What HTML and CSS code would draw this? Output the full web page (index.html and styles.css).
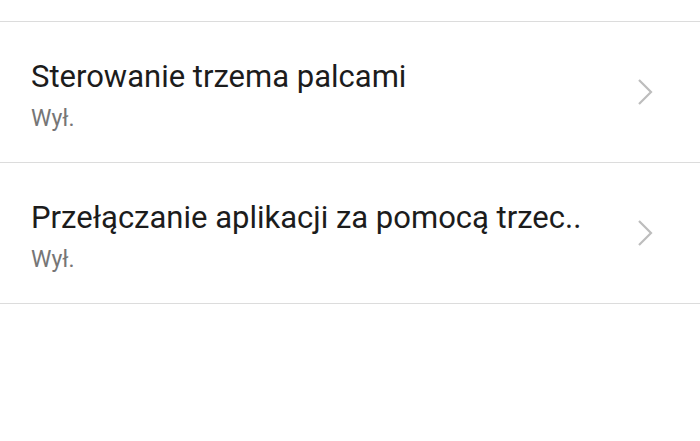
FILE: index.html
```html
<!DOCTYPE html>
<html lang="pl">
<head>
<meta charset="utf-8">
<link rel="stylesheet" href="styles.css">
</head>
<body>
<div class="list">
  <div class="spacer"></div>
  <div class="row">
    <div class="text">
      <div class="title">Sterowanie trzema palcami</div>
      <div class="sub">Wył.</div>
    </div>
    <svg class="chev" width="16" height="28" viewBox="0 0 16 28"><path d="M2 2 L14 14 L2 26" fill="none" stroke="#bdbdbd" stroke-width="2.2"/></svg>
  </div>
  <div class="row">
    <div class="text">
      <div class="title">Przełączanie aplikacji za pomocą trzec..</div>
      <div class="sub">Wył.</div>
    </div>
    <svg class="chev" width="16" height="28" viewBox="0 0 16 28"><path d="M2 2 L14 14 L2 26" fill="none" stroke="#bdbdbd" stroke-width="2.2"/></svg>
  </div>
</div>
</body>
</html>
```
FILE: styles.css
```css
html, body {
  margin: 0;
  padding: 0;
  background: #ffffff;
}
body {
  font-family: Roboto, "Noto Sans", sans-serif;
  width: 700px;
  height: 441px;
  overflow: hidden;
}
.spacer {
  height: 21px;
  border-bottom: 1px solid #dcdcdc;
}
.row {
  height: 140px;
  border-bottom: 1px solid #dcdcdc;
  display: flex;
  align-items: center;
  padding: 0 47px 0 31px;
}
.text {
  flex: 1;
  padding-top: 8px;
}
.title {
  font-size: 31px;
  line-height: 36px;
  color: #1c1c1c;
}
.sub {
  font-size: 23px;
  line-height: 28px;
  color: #767676;
  margin-top: 10px;
}
.chev {
  display: block;
  flex: none;
}
```
